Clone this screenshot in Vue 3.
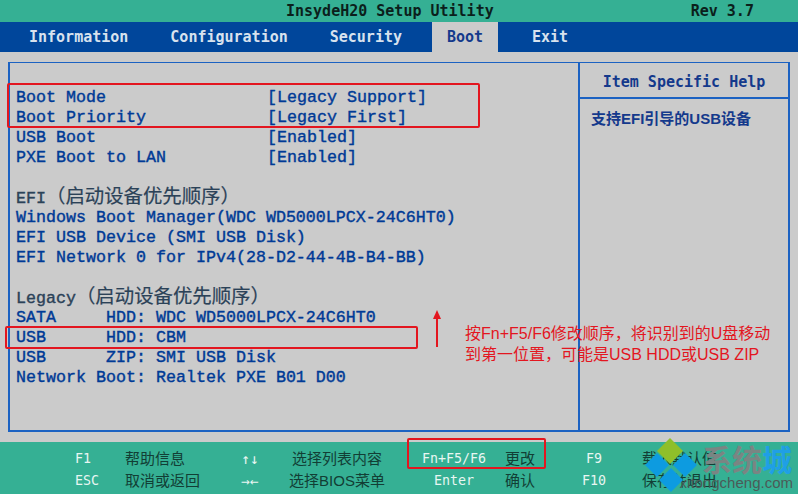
<script setup>
const tabs = ['Information', 'Configuration', 'Security', 'Boot', 'Exit']

const rows = [
  { name: 'Boot Mode', value: '[Legacy Support]' },
  { name: 'Boot Priority', value: '[Legacy First]' },
  { name: 'USB Boot', value: '[Enabled]' },
  { name: 'PXE Boot to LAN', value: '[Enabled]' },
  { name: '' },
  { name: 'EFI', note: '（启动设备优先顺序）', head: true },
  { name: 'Windows Boot Manager(WDC WD5000LPCX-24C6HT0)' },
  { name: 'EFI USB Device (SMI USB Disk)' },
  { name: 'EFI Network 0 for IPv4(28-D2-44-4B-B4-BB)' },
  { name: '' },
  { name: 'Legacy', note: '（启动设备优先顺序）', head: true },
  { name: 'SATA     HDD: WDC WD5000LPCX-24C6HT0' },
  { name: 'USB      HDD: CBM' },
  { name: 'USB      ZIP: SMI USB Disk' },
  { name: 'Network Boot: Realtek PXE B01 D00' }
]

const footer = [
  ['F1', '帮助信息', '↑↓', '选择列表内容', 'Fn+F5/F6', '更改', 'F9', '载入默认值'],
  ['ESC', '取消或返回', '→←', '选择BIOS菜单', 'Enter', '确认', 'F10', '保存并退出']
]
</script>

<template>
  <div class="bios">
    <header class="title-bar">
      <span class="title">InsydeH20 Setup Utility</span>
      <span class="rev">Rev 3.7</span>
    </header>

    <nav class="tabs">
      <div v-for="tab in tabs" :key="tab" class="tab" :class="{ active: tab === 'Boot' }">{{ tab }}</div>
    </nav>

    <main class="content">
      <div class="panel">
        <section class="list">
          <div v-for="(row, i) in rows" :key="i" class="row" :class="{ head: row.head }">
            <span class="name">{{ row.name }}<span v-if="row.note" class="note">{{ row.note }}</span></span>
            <span v-if="row.value">{{ row.value }}</span>
          </div>
        </section>
        <aside class="help">
          <div class="help-title">Item Specific Help</div>
          <div class="help-text">支持EFI引导的USB设备</div>
        </aside>
      </div>
    </main>

    <footer class="footer">
      <template v-for="(line, l) in footer" :key="l">
        <span
          v-for="(cell, c) in line"
          :key="c"
          class="cell"
          :class="'c' + c"
        >{{ cell }}</span>
      </template>
    </footer>

    <!-- annotations drawn on top of the screenshot -->
    <div class="mark mark-a"></div>
    <div class="mark mark-b"></div>
    <div class="mark mark-c"></div>
    <svg class="arrow" width="12" height="40" viewBox="0 0 12 40">
      <path d="M6 9V38" stroke="#e3161f" stroke-width="2" fill="none" />
      <path d="M6 1L10 10H2Z" fill="#e3161f" />
    </svg>
    <div class="annotation">按Fn+F5/F6修改顺序，将识别到的U盘移动<br />到第一位置，可能是USB HDD或USB ZIP</div>

    <div class="wm-name">系统<span class="wm-blue">城</span></div>
    <div class="wm-url">xitongcheng.com</div>
    <svg class="logo" width="60" height="56" viewBox="0 0 60 56">
      <path d="M27 0L40 13L27 26L14 13Z" fill="#8fbf2a" />
      <path d="M14 15L26 27L14 39L2 27Z" fill="#0d9be0" />
      <path d="M42 15L54 27L42 39L30 27Z" fill="#0d9be0" />
      <path d="M28 30L40 42L28 54L16 42Z" fill="#0d9be0" />
    </svg>
  </div>
</template>

<style>
html,
body {
  margin: 0;
  background: #cbcbcb;
}
</style>

<style scoped>
.bios {
  position: relative;
  width: 798px;
  height: 494px;
  overflow: hidden;
  display: flex;
  flex-direction: column;
  background: #cbcbcb;
  font-family: "Liberation Sans", "Noto Sans CJK SC", sans-serif;
}

.title-bar {
  height: 22px;
  flex: none;
  display: flex;
  align-items: center;
  padding-left: 286px;
  background: #35b094;
  color: #0b1f1c;
  font: bold 15px/22px "DejaVu Sans Mono", monospace;
}

.rev {
  margin-left: 197px;
}

.tabs {
  height: 30px;
  flex: none;
  display: flex;
  padding-left: 14px;
  background: #00469b;
  color: #d8e2ee;
  font: bold 15px/30px "DejaVu Sans Mono", monospace;
}

.tab {
  padding: 0 15px;
}

.tab + .tab {
  margin-left: 12px;
}

.tab:nth-child(4) {
  margin-left: 15px;
}

.tab:nth-child(5) {
  margin-left: 19px;
}

.tab.active {
  width: 36px;
  background: #cbcbcb;
  color: #14398c;
}

.content {
  flex: 1;
  padding: 10px 8px;
}

.panel {
  box-sizing: border-box;
  width: 782px;
  height: 370px;
  display: flex;
  border: 2px solid #1c62c2;
  border-top-width: 1px;
}

.list {
  box-sizing: border-box;
  width: 570px;
  padding: 25px 0 0 6px;
  border-right: 2px solid #1c62c2;
  color: #003a96;
  font: 16.67px/20px "Liberation Mono", "Noto Sans CJK SC", monospace;
  -webkit-text-stroke: 0.4px #003a96;
}

.row {
  display: grid;
  grid-template-columns: 251px auto;
  height: 20px;
  white-space: pre;
}

.row .name {
  grid-column: 1;
}

.row.head {
  color: #2b4258;
  -webkit-text-stroke: 0.4px #2b4258;
}

.note {
  font-size: 19.4px;
  -webkit-text-stroke: 0.2px #2b4258;
}

.help {
  flex: 1;
  color: #14398c;
}

.help-title {
  height: 34px;
  border-bottom: 2px solid #1c62c2;
  text-align: center;
  font: bold 15px/39px "DejaVu Sans Mono", monospace;
}

.help-text {
  padding: 10px 0 0 11px;
  font: bold 15px/20px "Liberation Sans", "Noto Sans CJK SC", sans-serif;
}

.footer {
  height: 52px;
  flex: none;
  box-sizing: border-box;
  display: grid;
  grid-template-columns: 50px 100px 50px 124px 106px 59px 60px auto;
  grid-auto-rows: 22px;
  padding: 6px 0 0 75px;
  background: #35b094;
  color: #123e35;
  font-size: 15px;
  line-height: 22px;
  white-space: nowrap;
}

.cell.c0,
.cell.c2,
.cell.c4,
.cell.c6 {
  color: #e8f6f2;
  font-family: "DejaVu Sans Mono", monospace;
  font-size: 13.3px;
}

.cell.c2 {
  font-size: 14.5px;
}

.cell.c2,
.cell.c3,
.cell.c4,
.cell.c6 {
  text-align: center;
}

.cell.c4 {
  padding-left: 4px;
}

.cell.c7 {
  margin-left: 18px;
}

.mark {
  position: absolute;
  box-sizing: border-box;
  border: 2px solid #e3161f;
  border-radius: 2px;
}

.mark-a {
  left: 7px;
  top: 83px;
  width: 473px;
  height: 45px;
}

.mark-b {
  left: 5px;
  top: 326px;
  width: 413px;
  height: 23px;
}

.mark-c {
  left: 407px;
  top: 438px;
  width: 139px;
  height: 31px;
}

.arrow {
  position: absolute;
  left: 431px;
  top: 309px;
}

.annotation {
  position: absolute;
  left: 465px;
  top: 323px;
  color: #e3161f;
  font-size: 16px;
  line-height: 21px;
  white-space: nowrap;
}

.logo {
  position: absolute;
  left: 643px;
  top: 438px;
}

.wm-name {
  position: absolute;
  left: 702px;
  top: 440px;
  color: #7a8583;
  font: 700 30px/36px "Noto Sans CJK SC", sans-serif;
  white-space: nowrap;
}

.wm-blue {
  color: #1f9fe6;
}

.wm-url {
  position: absolute;
  right: 5px;
  top: 474px;
  color: #4b5b58;
  font-size: 15px;
  line-height: 18px;
}
</style>
